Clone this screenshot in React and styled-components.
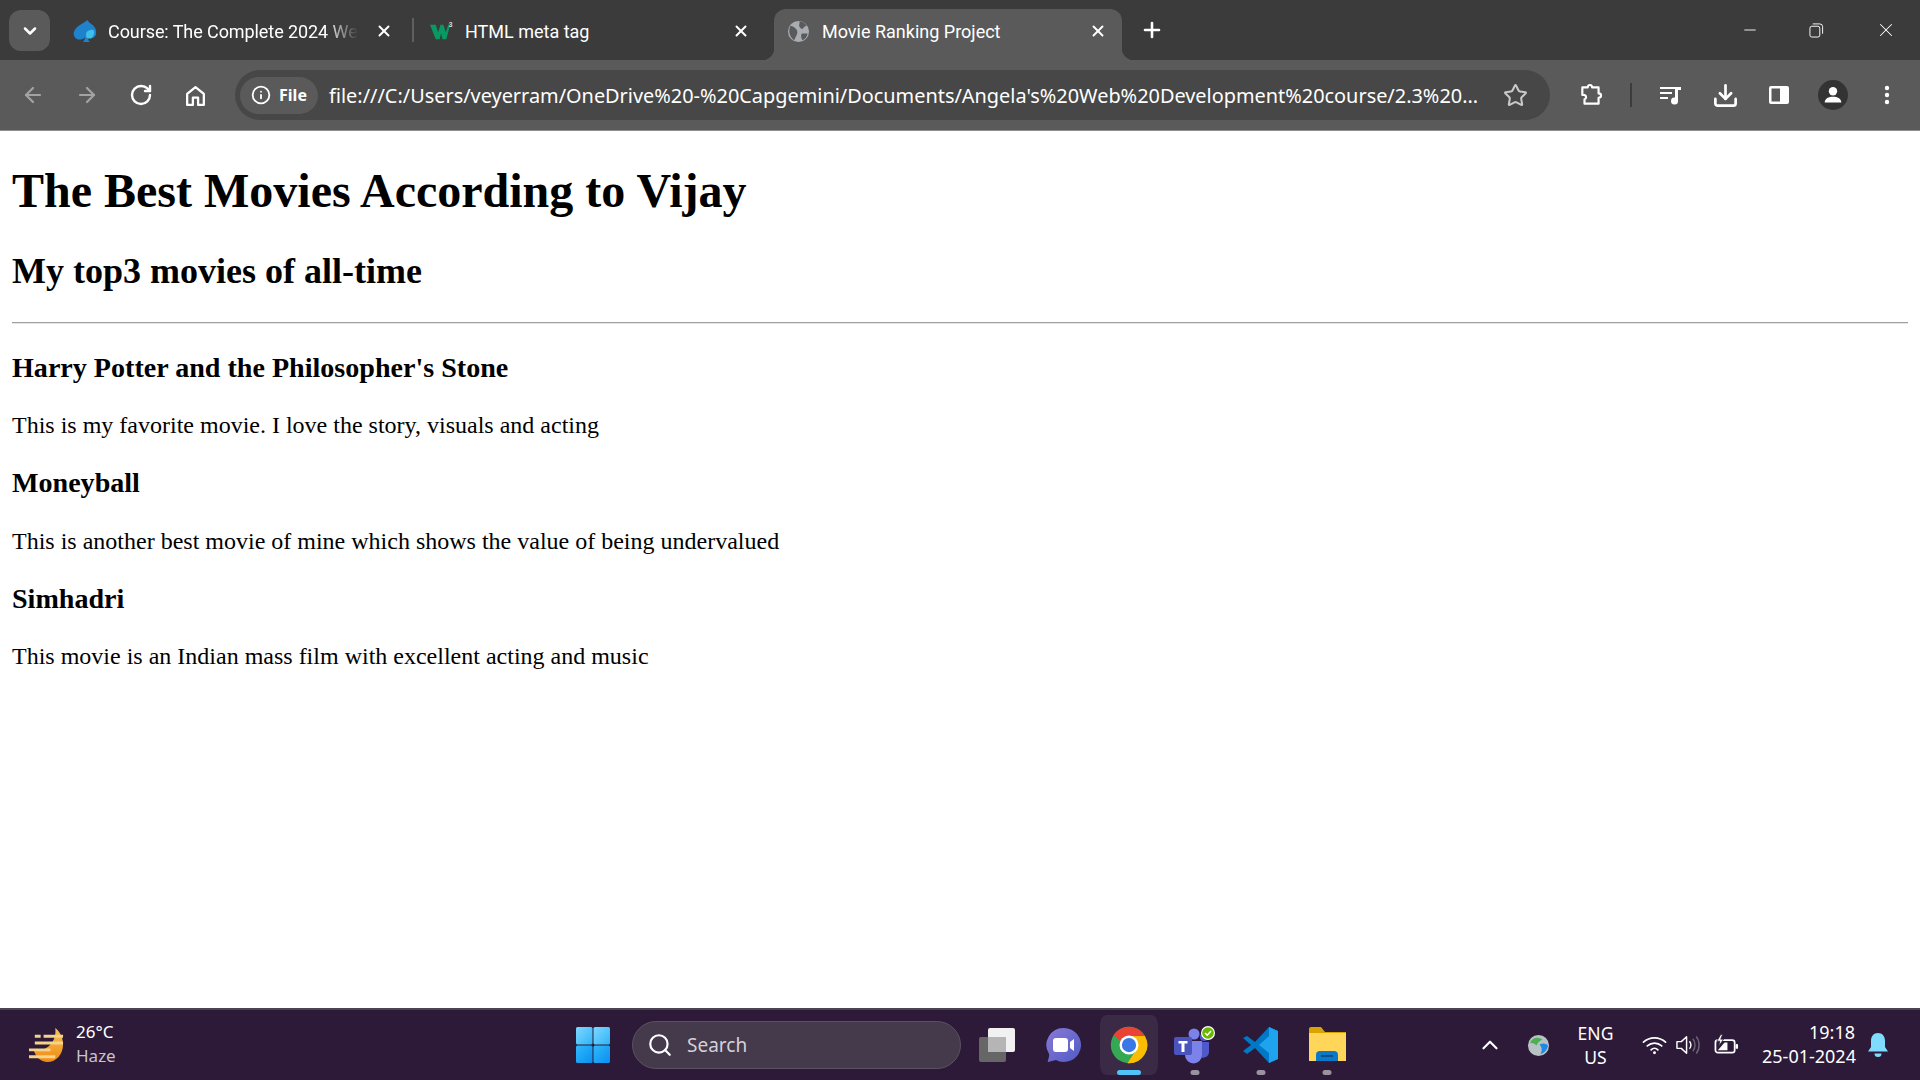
import React from "react";
import styled, { createGlobalStyle } from "styled-components";
import { ChevronDown, X, Plus, ArrowLeft, ArrowRight, RotateCw, Star, Download, Info, Search, ChevronUp, Minus } from "lucide-react";

const Global = createGlobalStyle`
  html, body { margin: 0; padding: 0; background: #fff; }
  #root { height: 100vh; }
  * { box-sizing: border-box; }
`;

const Shell = styled.div`
  display: flex; flex-direction: column; height: 1080px; width: 1920px; overflow: hidden;
  font-family: "Noto Sans", sans-serif;
`;

/* tab strip */
const TabStrip = styled.div`
  height: 60px; background: #3b3b3b; display: flex; align-items: flex-end; color: #fff; flex: none;
`;
const TabSwitcher = styled.button`
  width: 41px; height: 41px; margin: 0 8px 9px 9px; align-self: flex-end; border: 0; border-radius: 12px;
  background: #5a5a5a; color: #fff; display: flex; align-items: center; justify-content: center; padding: 0;
`;
const Tab = styled.div`
  position: relative; height: 51px; width: ${p => p.$w}px; padding: 0 ${p => (p.$active ? 12 : 15)}px 7px ${p => (p.$active ? 13 : 15)}px; display: flex; align-items: center;
  margin-left: ${p => (p.$active ? 6 : 0)}px;
  font: 18px Roboto, sans-serif; color: #fff; border-radius: 12px 12px 0 0;
  background: ${p => (p.$active ? "#5a5a5a" : "transparent")};
  ${p => p.$active && `
    &::before, &::after { content: ""; position: absolute; bottom: 0; width: 12px; height: 12px; }
    &::before { left: -12px; background: radial-gradient(circle at 0 0, transparent 12px, #5a5a5a 12.5px); }
    &::after { right: -12px; background: radial-gradient(circle at 100% 0, transparent 12px, #5a5a5a 12.5px); }
  `}
`;
const Favicon = styled.span`
  width: 23px; height: 23px; flex: none; display: flex; margin-right: 12px;
`;
const TabTitle = styled.span`
  flex: 1; white-space: nowrap; overflow: hidden;
  ${p => p.$fade && `letter-spacing: -0.08px; -webkit-mask-image: linear-gradient(to right, #000 84%, transparent 97%); mask-image: linear-gradient(to right, #000 84%, transparent 97%);`}
`;
const TabClose = styled.span`
  width: 24px; height: 24px; flex: none; display: flex; align-items: center; justify-content: center; margin-left: 6px; color: #fff;
`;
const TabDivider = styled.span`
  width: 2px; height: 24px; background: #5f5f5f; margin: 0 1px 18px 1px; align-self: flex-end; flex: none;
`;
const NewTab = styled.span`
  width: 30px; height: 30px; margin: 0 0 15px 15px; display: flex; align-items: center; justify-content: center; color: #fff;
`;
const WindowControls = styled.div`
  margin-left: auto; display: flex; align-self: flex-start; height: 60px; align-items: center; padding-bottom: 1px;
`;
const WindowButton = styled.span`
  width: 68px; display: flex; align-items: center; justify-content: center; color: #fff;
  padding-right: ${p => p.$inset || 0}px;
`;

/* toolbar */
const Toolbar = styled.div`
  height: 71px; flex: none; background: #5a5a5a; display: flex; align-items: center; padding-left: 6px; color: #fff;
  border-bottom: 1px solid #8f8f8f;
`;
const ToolButton = styled.span`
  width: 54px; height: 44px; flex: none; display: flex; align-items: center; justify-content: center;
  margin-left: ${p => p.$gap || 0}px;
  color: ${p => (p.$dim ? "#a3a3a3" : "#fff")};
`;
const Omnibox = styled.div`
  width: 1315px; height: 50px; margin-left: 13px; flex: none; background: #474747; border-radius: 25px;
  display: flex; align-items: center; padding: 0 22px 0 5px;
`;
const SiteChip = styled.span`
  width: 78px; height: 37px; border-radius: 19px; background: #5a5a5a; display: flex; align-items: center;
  justify-content: center; gap: 8px; font: 700 16px "Noto Sans", sans-serif; color: #fff; flex: none;
`;
const Url = styled.span`
  margin-left: 11px; flex: 1; font: 19.9px "Noto Sans", sans-serif; color: #fff; white-space: nowrap;
`;
const ToolDivider = styled.span`
  width: 2px; height: 24px; background: #3c3c3c; margin: 0 12px; flex: none;
`;
const Avatar = styled.span`
  width: 30px; height: 30px; border-radius: 50%; background: #333; display: flex; align-items: center; justify-content: center;
`;

/* page */
const Page = styled.main`
  flex: 1; background: #fff; color: #000; padding: 0 12px; min-height: 0;
  font-family: "Liberation Serif", "Times New Roman", serif;
  display: flow-root;
`;
const Title = styled.h1` font-size: 48px; font-weight: 700; margin: 32.16px 0; `;
const Subtitle = styled.h2` font-size: 36px; font-weight: 700; margin: 29.88px 0; `;
const Rule = styled.hr` margin: 12px 0; border: 0; border-top: 1px solid #a0a0a0; border-bottom: 1px solid #e4e4e4; `;
const MovieTitle = styled.h3` font-size: 28.08px; font-weight: 700; margin: 28.08px 0; `;
const Body = styled.p` font-size: 24px; margin: 24px 0; `;

/* taskbar */
const Taskbar = styled.footer`
  height: 72px; flex: none; background: #2c1a38; border-top: 2px solid #4a4350; display: flex; align-items: center; color: #fff;
  font-family: "Noto Sans", sans-serif;
`;
const Widget = styled.div`
  width: 575px; padding-left: 28px; display: flex; align-items: center; gap: 11px; flex: none;
`;
const WidgetText = styled.div`
  display: flex; flex-direction: column; font-size: 17px; line-height: 24px; padding-bottom: 2px;
  & > span:last-child { color: #c9c3cd; }
`;
const StartIcon = styled.span`
  width: 36px; height: 36px; flex: none; display: flex;
`;
const SearchBox = styled.div`
  width: 329px; height: 48px; margin-left: 21px; flex: none; border-radius: 24px; background: #453a4c; border: 1px solid #5b5162;
  display: flex; align-items: center; padding-left: 14px; gap: 14px; font-size: 19px; color: #d5d0d8;
`;
const AppSlot = styled.span`
  position: relative; width: 66px; height: 60px; flex: none; display: flex; align-items: center; justify-content: center;
  border-radius: 10px;
  border: 0 solid transparent; border-width: 0 4px; background-clip: padding-box;
  ${p => p.$active && `background-color: #3a2a46;`}
  ${p => p.$dot && `
    &::after { content: ""; position: absolute; bottom: 0; left: 50%; transform: translateX(-50%);
      height: 5px; border-radius: 3px; width: ${p.$active ? 24 : 9}px; background: ${p.$active ? "#4fc3f7" : "#9a929f"}; }
  `}
`;
const Apps = styled.div`
  display: flex; margin-left: 3px;
`;
const Tray = styled.div`
  margin-left: auto; display: flex; align-items: center; padding-right: 31px;
`;
const TrayIcon = styled.span`
  display: flex; align-items: center; justify-content: center; flex: none; width: ${p => p.$w || 34}px;
  margin-left: ${p => p.$gap || 0}px;
`;
const Lang = styled.div`
  width: 70px; text-align: center; font-size: 17.5px; line-height: 24px; margin: 0 7.5px 0 6px;
`;
const Clock = styled.div`
  text-align: right; font-size: 18px; line-height: 24px; margin-left: 16px; width: 93px; padding-bottom: 2px; white-space: nowrap;
`;

/* drawn icons */
const SpadeDrop = () => (
  <svg viewBox="0 0 24 24" width="23" height="23">
    <path d="M15 0C12 3 6 5 2.500 9.500c-3 4-2 9 2 10.500 3 1 6 0 8-2 0 2-1 3.500-2 5h7c-1-1-2-3-2-5 2 1.500 5 1.500 7-.5 3-3 2-8-1-11.500C18 3.500 16 2 15 0z" fill="#1f82cc" />
    <path d="M14 13c2-2.500 6-3.500 8-2 .8 3-.5 6.500-3 8-2 .8-4 .5-5-1-.5-2-.5-3.500 0-5z" fill="#3cc0ea" />
  </svg>
);
const W3 = () => (
  <svg viewBox="0 0 24 24" width="24" height="23">
    <path d="M0 5h6l2.500 8L11 5h3l2.500 8L19 5h2l-4 15h-4l-1.500-6L10 20H6z" fill="#079a63" />
    <text x="19.500" y="7" fontSize="7" fontWeight="700" fill="#ddd" fontFamily="Liberation Sans">3</text>
  </svg>
);
const Globe = () => (
  <svg viewBox="0 0 24 24" width="23" height="23">
    <circle cx="12" cy="12" r="11" fill="#a9adb2" />
    <path d="M3.500 6c3 .5 4.500 2 6 3.500s1.500 3.500 1 5-1.500 3-3 6.500C4 19 .5 13 3.500 6zM13 1.500c3.500 0 6 1.500 8 5-2-.5-3 .5-4 2s-3 .5-4-1.500.5-3.500 0-5.500zM15.500 14h6c-.5 3.500-2.500 6-5.500 7-1-2-2-5-.5-7z" fill="#5a5a5a" />
  </svg>
);
const Home = () => (
  <svg viewBox="0 0 24 24" width="25" height="25" fill="none" stroke="#fff" strokeWidth="2.200" strokeLinejoin="round">
    <path d="M4 10.500 12 4l8 6.500V21h-5.500v-7h-5v7H4z" />
  </svg>
);
const Puzzle = () => (
  <svg viewBox="0 0 24 24" width="26" height="26" fill="none" stroke="#fff" strokeWidth="2" strokeLinejoin="round">
    <path d="M3 5h5c0-3 4-3 4 0h6v5.500c3 0 3 4 0 4V20H5v-4c2-1 2-3 0-4H3z" transform="translate(1 0)" />
  </svg>
);
const MediaQueue = () => (
  <svg viewBox="0 0 24 24" width="24" height="24" fill="#fff">
    <path d="M1 4h15v2H1zM1 9h12v2H1zM1 14h8v2H1z" />
    <path d="M16 4h6v3h-3v11a3.500 3.500 0 1 1-3-3.400z" />
  </svg>
);
const SidePanel = () => (
  <svg viewBox="0 0 24 24" width="24" height="24">
    <rect x="2" y="3" width="20" height="18" rx="2" fill="#fff" />
    <rect x="4.500" y="5.500" width="8.500" height="13" fill="#5a5a5a" />
  </svg>
);
const Person = () => (
  <svg viewBox="0 0 24 24" width="20" height="20" fill="#fff">
    <circle cx="12" cy="7.500" r="5" />
    <path d="M2 21c0-5 5-7 10-7s10 2 10 7z" />
  </svg>
);
const Dots = () => (
  <svg viewBox="0 0 24 24" width="24" height="24" fill="#fff">
    <circle cx="12" cy="5" r="2.200" /><circle cx="12" cy="12" r="2.200" /><circle cx="12" cy="19" r="2.200" />
  </svg>
);
const Restore = () => (
  <svg viewBox="0 0 16 16" width="15" height="16" fill="none" stroke="#fff" strokeWidth="1">
    <rect x="1" y="4" width="10.500" height="11.500" rx="2" />
    <path d="M4 1.500h7.500a3 3 0 0 1 3 3V12" />
  </svg>
);
const WeatherIcon = () => (
  <svg viewBox="0 0 38 38" width="37" height="37">
    <defs><linearGradient id="moon" x1="0" y1="0" x2="0" y2="1"><stop offset="0" stopColor="#f6c35a" /><stop offset="1" stopColor="#f08a12" /></linearGradient></defs>
    <path d="M28 1c6 5 8 11 8 17 0 10-7 18-16 18C13 36 8 31 6 24c12 2 24-8 22-23z" fill="url(#moon)" />
    <path d="M7 8h6v3H7zM16 8h20v3H16zM7 15h29v3H7zM1 22h22v3H1zM1 29h27v3H1z" fill="#f4d48a" />
  </svg>
);
const WinLogo = () => (
  <svg viewBox="0 0 36 36" width="36" height="36">
    <defs>
      <linearGradient id="w1" x1="0" y1="0" x2="1" y2="1"><stop offset="0" stopColor="#7fd8ff" /><stop offset="1" stopColor="#2fb4f8" /></linearGradient>
      <linearGradient id="w2" x1="0" y1="0" x2="1" y2="1"><stop offset="0" stopColor="#2fb9fb" /><stop offset="1" stopColor="#0a8ff0" /></linearGradient>
    </defs>
    <rect x="1" y="0" width="16.500" height="17.500" rx="1.500" fill="url(#w1)" />
    <rect x="18.500" y="0" width="16.500" height="17.500" rx="1.500" fill="url(#w1)" />
    <rect x="1" y="18.500" width="16.500" height="17.500" rx="1.500" fill="url(#w2)" />
    <rect x="18.500" y="18.500" width="16.500" height="17.500" rx="1.500" fill="url(#w2)" />
  </svg>
);
const TaskView = () => (
  <svg viewBox="0 0 38 36" width="38" height="36">
    <rect x="1" y="10" width="27" height="25" rx="2" fill="#666" />
    <rect x="10" y="1" width="27" height="24" rx="2" fill="#f1f1f1" />
    <rect x="10" y="10" width="18" height="15" fill="#b5b5b5" />
  </svg>
);
const Meet = () => (
  <svg viewBox="0 0 36 36" width="36" height="36">
    <defs><linearGradient id="mt" x1="0" y1="0" x2="1" y2="1"><stop offset="0" stopColor="#8a78d8" /><stop offset="1" stopColor="#4f5cc4" /></linearGradient></defs>
    <path d="M19 1a17 17 0 1 1-8 32l-8 2c-1 0 2-6 1-8A17 17 0 0 1 19 1z" fill="url(#mt)" />
    <rect x="8" y="11" width="15" height="14" rx="3" fill="#fff" />
    <path d="M25 15l4-3v12l-4-3z" fill="#fff" />
  </svg>
);
const ChromeLogo = () => (
  <svg viewBox="0 0 48 48" width="38" height="38">
    <circle cx="24" cy="24" r="23" fill="#34a853" />
    <path d="M44 12.500A23 23 0 0 1 22 47L33.500 29.500 24 13z" fill="#fbbc04" />
    <path d="M4.500 11.800A23 23 0 0 1 44 12.500H24A11.500 11.500 0 0 0 13.500 19z" fill="#ea4335" />
    <circle cx="24" cy="24" r="12" fill="#fff" />
    <circle cx="24" cy="24" r="9" fill="#3b78e7" />
  </svg>
);
const Teams = () => (
  <svg viewBox="0 0 44 38" width="44" height="38">
    <circle cx="21" cy="8" r="5.500" fill="#7b83eb" />
    <circle cx="31" cy="11" r="4" fill="#5059c9" />
    <path d="M25 16h11v10a6 6 0 0 1-11 3z" fill="#5059c9" />
    <path d="M12 15h17v14a8.500 8.500 0 0 1-17 0z" fill="#7b83eb" />
    <rect x="1" y="11" width="18" height="18" rx="2" fill="#4b53bc" />
    <path d="M5.500 15h9v2.500h-3V26h-3v-8.500h-3z" fill="#fff" />
    <circle cx="35" cy="7" r="7" fill="#fff" />
    <circle cx="35" cy="7" r="5.800" fill="#6bb700" />
    <path d="M32 7l2.200 2.200L38 5" stroke="#fff" strokeWidth="1.600" fill="none" />
  </svg>
);
const VsCode = () => (
  <svg viewBox="0 0 36 36" width="36" height="36">
    <path d="M26 0 35 4v28l-9 4L12 21 4 27 0 24l8-6-8-7 4-2 8 6z" fill="#0078c8" />
    <path d="M26 0 35 4v28l-9 4zM26 9 16 18l10 8z" fill="#1fa3ee" fillRule="evenodd" />
  </svg>
);
const Files = () => (
  <svg viewBox="0 0 37 36" width="37" height="36">
    <path d="M0 2a2 2 0 0 1 2-2h10l4 5h21v8H0z" fill="#d9a300" />
    <path d="M0 6h37v28H0z" fill="#ffd659" />
    <path d="M7 34v-6a4 4 0 0 1 4-4h14a4 4 0 0 1 4 4v6z" fill="#0b78c8" />
    <path d="M12 28h12v2H12z" fill="#0a4f8c" />
  </svg>
);
const TrayGlobe = () => (
  <svg viewBox="0 0 24 24" width="23" height="23">
    <circle cx="12" cy="12" r="11" fill="#b8c2c4" />
    <path d="M3 9c4-6 9-6 13-3-3 1-5 3-6 6-2-2-4-3-7-3z" fill="#4caf50" />
    <path d="M13 11c4-2 7-1 9 1-1 5-4 8-8 9 2-3 2-7-1-10z" fill="#1e88e5" />
  </svg>
);
const Wifi = () => (
  <svg viewBox="0 0 26 22" width="25" height="22" fill="none" stroke="#fff" strokeWidth="1.800" strokeLinecap="round">
    <path d="M1.500 8C8 2 18 2 24.500 8M5.500 12c4.500-4 10.500-4 15 0M9.500 16c2-2 5-2 7 0" />
    <circle cx="13" cy="19" r="1.500" fill="#fff" stroke="none" />
  </svg>
);
const Volume = () => (
  <svg viewBox="0 0 26 22" width="25" height="22" fill="none" stroke="#fff" strokeWidth="1.500">
    <path d="M1 7.500h4.500L11 2.500v17l-5.500-5H1z" strokeLinejoin="round" />
    <path d="M14 7c2 2 2 6 0 8" />
    <path d="M17.500 4.500c3 3.500 3 9.500 0 13M21 2c4 5 4 13 0 18" stroke="#6e6574" />
  </svg>
);
const Battery = () => (
  <svg viewBox="0 0 26 22" width="25" height="22">
    <rect x="1.500" y="6" width="20" height="13" rx="2.500" fill="none" stroke="#fff" strokeWidth="1.800" />
    <rect x="22.500" y="10" width="2.500" height="5" rx="1" fill="#fff" />
    <path d="M4 16.500l7-8h3v8z" fill="#fff" />
    <path d="M7 0 3 7h3l-1 5 5-7H7l2-5z" fill="#fff" stroke="#2c1a38" strokeWidth="0.800" />
  </svg>
);
const Bell = () => (
  <svg viewBox="0 0 22 24" width="22" height="24" fill="#7fdcff">
    <path d="M11 0c4.500 0 7 3.500 7 8v6l3 4.500H1L4 14V8c0-4.500 2.500-8 7-8z" />
    <path d="M7.500 20.500h7a3.500 3.500 0 0 1-7 0z" />
  </svg>
);

const movies = [
  ["Harry Potter and the Philosopher's Stone", "This is my favorite movie. I love the story, visuals and acting"],
  ["Moneyball", "This is another best movie of mine which shows the value of being undervalued"],
  ["Simhadri", "This movie is an Indian mass film with excellent acting and music"],
];

export default function App() {
  return (
    <Shell>
      <Global />
      <TabStrip>
        <TabSwitcher><ChevronDown size={20} strokeWidth={3} /></TabSwitcher>
        <Tab $w={353}>
          <Favicon><SpadeDrop /></Favicon>
          <TabTitle $fade>Course: The Complete 2024 We</TabTitle>
          <TabClose><X size={18} strokeWidth={2.6} /></TabClose>
        </Tab>
        <TabDivider />
        <Tab $w={353}>
          <Favicon><W3 /></Favicon>
          <TabTitle>HTML meta tag</TabTitle>
          <TabClose><X size={18} strokeWidth={2.6} /></TabClose>
        </Tab>
        <Tab $active $w={348}>
          <Favicon><Globe /></Favicon>
          <TabTitle>Movie Ranking Project</TabTitle>
          <TabClose><X size={18} strokeWidth={2.6} /></TabClose>
        </Tab>
        <NewTab><Plus size={24} strokeWidth={2.6} /></NewTab>
        <WindowControls>
          <WindowButton><Minus size={18} strokeWidth={1.2} /></WindowButton>
          <WindowButton $inset={4}><Restore /></WindowButton>
          <WindowButton><X size={22} strokeWidth={1.1} /></WindowButton>
        </WindowControls>
      </TabStrip>
      <Toolbar>
        <ToolButton $dim><ArrowLeft size={24} strokeWidth={2.2} /></ToolButton>
        <ToolButton $dim><ArrowRight size={24} strokeWidth={2.2} /></ToolButton>
        <ToolButton><RotateCw size={24} strokeWidth={2.4} /></ToolButton>
        <ToolButton><Home /></ToolButton>
        <Omnibox>
          <SiteChip><Info size={20} strokeWidth={2.2} />File</SiteChip>
          <Url>file:///C:/Users/veyerram/OneDrive%20-%20Capgemini/Documents/Angela's%20Web%20Development%20course/2.3%20...</Url>
          <Star size={25} strokeWidth={2} color="#c8c8c8" />
        </Omnibox>
        <ToolButton $gap={14}><Puzzle /></ToolButton>
        <ToolDivider />
        <ToolButton><MediaQueue /></ToolButton>
        <ToolButton><Download size={27} strokeWidth={2.4} /></ToolButton>
        <ToolButton><SidePanel /></ToolButton>
        <ToolButton><Avatar><Person /></Avatar></ToolButton>
        <ToolButton><Dots /></ToolButton>
      </Toolbar>
      <Page>
        <Title>The Best Movies According to Vijay</Title>
        <Subtitle>My top3 movies of all-time</Subtitle>
        <Rule />
        {movies.map(([t, d]) => (
          <React.Fragment key={t}>
            <MovieTitle>{t}</MovieTitle>
            <Body>{d}</Body>
          </React.Fragment>
        ))}
      </Page>
      <Taskbar>
        <Widget>
          <WeatherIcon />
          <WidgetText><span>26°C</span><span>Haze</span></WidgetText>
        </Widget>
        <StartIcon><WinLogo /></StartIcon>
        <SearchBox><Search size={26} strokeWidth={2} color="#fff" />Search</SearchBox>
        <Apps>
          <AppSlot><TaskView /></AppSlot>
          <AppSlot><Meet /></AppSlot>
          <AppSlot $active $dot><ChromeLogo /></AppSlot>
          <AppSlot $dot><Teams /></AppSlot>
          <AppSlot $dot><VsCode /></AppSlot>
          <AppSlot $dot><Files /></AppSlot>
        </Apps>
        <Tray>
          <TrayIcon $w={66}><ChevronUp size={26} strokeWidth={2} /></TrayIcon>
          <TrayIcon $w={32}><TrayGlobe /></TrayIcon>
          <Lang>ENG<br />US</Lang>
          <TrayIcon $w={32}><Wifi /></TrayIcon>
          <TrayIcon $w={36}><Volume /></TrayIcon>
          <TrayIcon $w={40}><Battery /></TrayIcon>
          <Clock>19:18<br />25-01-2024</Clock>
          <TrayIcon $w={22} $gap={12}><Bell /></TrayIcon>
        </Tray>
      </Taskbar>
    </Shell>
  );
}
